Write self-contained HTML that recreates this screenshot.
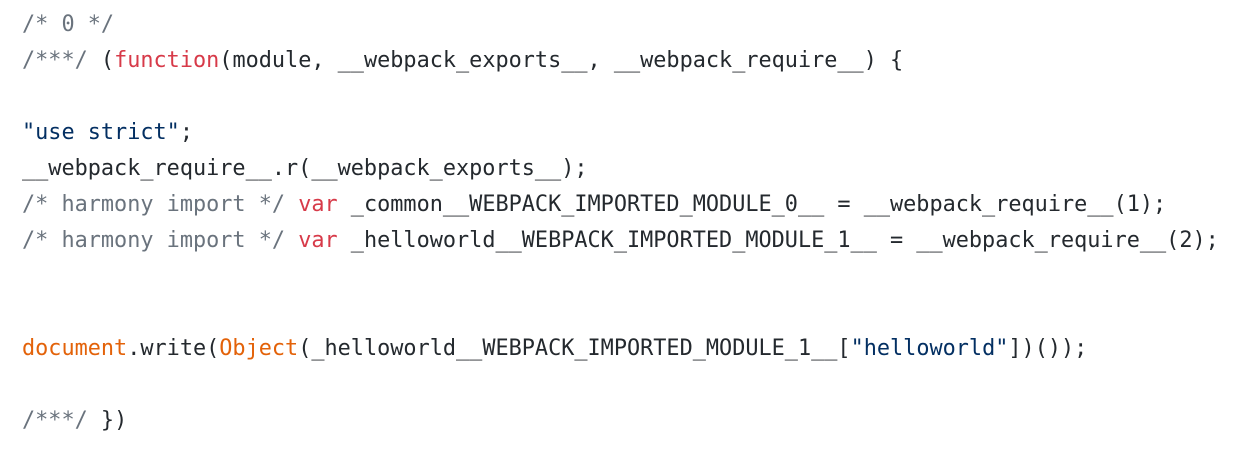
<!DOCTYPE html>
<html><head><style>
html,body{margin:0;padding:0;background:#fff;width:1258px;height:454px;overflow:hidden}
pre{margin:0;position:absolute;left:22px;top:7px;font-family:"DejaVu Sans Mono",monospace;font-size:21.85px;line-height:36px;color:#24292e}
.c{color:#6a737d}.k{color:#d73a49}.s{color:#032f62}.e{color:#e36209}
</style></head><body>
<pre><span class="c">/* 0 */</span>
<span class="c">/***/</span> (<span class="k">function</span>(module, __webpack_exports__, __webpack_require__) {

<span class="s">"use strict"</span>;
__webpack_require__.r(__webpack_exports__);
<span class="c">/* harmony import */</span> <span class="k">var</span> _common__WEBPACK_IMPORTED_MODULE_0__ = __webpack_require__(1);
<span class="c">/* harmony import */</span> <span class="k">var</span> _helloworld__WEBPACK_IMPORTED_MODULE_1__ = __webpack_require__(2);


<span class="e">document</span>.write(<span class="e">Object</span>(_helloworld__WEBPACK_IMPORTED_MODULE_1__[<span class="s">"helloworld"</span>])());

<span class="c">/***/</span> })</pre>
</body></html>
